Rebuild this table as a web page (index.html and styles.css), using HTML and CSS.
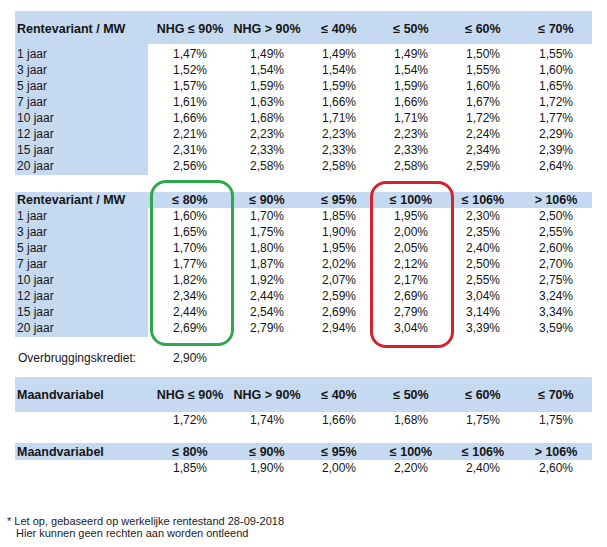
FILE: index.html
```html
<!DOCTYPE html>
<html lang="nl">
<head>
<meta charset="utf-8">
<title>Rentestanden</title>
<link rel="stylesheet" href="styles.css">
</head>
<body>
<div class="page">

  <section class="tbl t1">
    <div class="row head">
      <div class="lab">Rentevariant / MW</div>
      <div>NHG ≤ 90%</div><div>NHG &gt; 90%</div><div>≤ 40%</div><div>≤ 50%</div><div>≤ 60%</div><div>≤ 70%</div>
    </div>
    <div class="body">
      <div class="row"><div class="lab">1 jaar</div><div>1,47%</div><div>1,49%</div><div>1,49%</div><div>1,49%</div><div>1,50%</div><div>1,55%</div></div>
      <div class="row"><div class="lab">3 jaar</div><div>1,52%</div><div>1,54%</div><div>1,54%</div><div>1,54%</div><div>1,55%</div><div>1,60%</div></div>
      <div class="row"><div class="lab">5 jaar</div><div>1,57%</div><div>1,59%</div><div>1,59%</div><div>1,59%</div><div>1,60%</div><div>1,65%</div></div>
      <div class="row"><div class="lab">7 jaar</div><div>1,61%</div><div>1,63%</div><div>1,66%</div><div>1,66%</div><div>1,67%</div><div>1,72%</div></div>
      <div class="row"><div class="lab">10 jaar</div><div>1,66%</div><div>1,68%</div><div>1,71%</div><div>1,71%</div><div>1,72%</div><div>1,77%</div></div>
      <div class="row"><div class="lab">12 jaar</div><div>2,21%</div><div>2,23%</div><div>2,23%</div><div>2,23%</div><div>2,24%</div><div>2,29%</div></div>
      <div class="row"><div class="lab">15 jaar</div><div>2,31%</div><div>2,33%</div><div>2,33%</div><div>2,33%</div><div>2,34%</div><div>2,39%</div></div>
      <div class="row"><div class="lab">20 jaar</div><div>2,56%</div><div>2,58%</div><div>2,58%</div><div>2,58%</div><div>2,59%</div><div>2,64%</div></div>
    </div>
  </section>

  <section class="tbl t2">
    <span class="ring green"></span>
    <span class="ring red"></span>
    <div class="row head">
      <div class="lab">Rentevariant / MW</div>
      <div>≤ 80%</div><div>≤ 90%</div><div>≤ 95%</div><div>≤ 100%</div><div>≤ 106%</div><div>&gt; 106%</div>
    </div>
    <div class="body">
      <div class="row"><div class="lab">1 jaar</div><div>1,60%</div><div>1,70%</div><div>1,85%</div><div>1,95%</div><div>2,30%</div><div>2,50%</div></div>
      <div class="row"><div class="lab">3 jaar</div><div>1,65%</div><div>1,75%</div><div>1,90%</div><div>2,00%</div><div>2,35%</div><div>2,55%</div></div>
      <div class="row"><div class="lab">5 jaar</div><div>1,70%</div><div>1,80%</div><div>1,95%</div><div>2,05%</div><div>2,40%</div><div>2,60%</div></div>
      <div class="row"><div class="lab">7 jaar</div><div>1,77%</div><div>1,87%</div><div>2,02%</div><div>2,12%</div><div>2,50%</div><div>2,70%</div></div>
      <div class="row"><div class="lab">10 jaar</div><div>1,82%</div><div>1,92%</div><div>2,07%</div><div>2,17%</div><div>2,55%</div><div>2,75%</div></div>
      <div class="row"><div class="lab">12 jaar</div><div>2,34%</div><div>2,44%</div><div>2,59%</div><div>2,69%</div><div>3,04%</div><div>3,24%</div></div>
      <div class="row"><div class="lab">15 jaar</div><div>2,44%</div><div>2,54%</div><div>2,69%</div><div>2,79%</div><div>3,14%</div><div>3,34%</div></div>
      <div class="row"><div class="lab">20 jaar</div><div>2,69%</div><div>2,79%</div><div>2,94%</div><div>3,04%</div><div>3,39%</div><div>3,59%</div></div>
    </div>
  </section>

  <div class="row bridge">
    <div class="lab plain">Overbruggingskrediet:</div><div>2,90%</div>
  </div>

  <section class="tbl t3">
    <div class="row head">
      <div class="lab">Maandvariabel</div>
      <div>NHG ≤ 90%</div><div>NHG &gt; 90%</div><div>≤ 40%</div><div>≤ 50%</div><div>≤ 60%</div><div>≤ 70%</div>
    </div>
    <div class="row">
      <div></div><div>1,72%</div><div>1,74%</div><div>1,66%</div><div>1,68%</div><div>1,75%</div><div>1,75%</div>
    </div>
  </section>

  <section class="tbl t4">
    <div class="row head">
      <div class="lab">Maandvariabel</div>
      <div>≤ 80%</div><div>≤ 90%</div><div>≤ 95%</div><div>≤ 100%</div><div>≤ 106%</div><div>&gt; 106%</div>
    </div>
    <div class="row">
      <div></div><div>1,85%</div><div>1,90%</div><div>2,00%</div><div>2,20%</div><div>2,40%</div><div>2,60%</div>
    </div>
  </section>

  <p class="note">* Let op, gebaseerd op werkelijke rentestand 28-09-2018<br>Hier kunnen geen rechten aan worden ontleend</p>
</div>
</body>
</html>
```

FILE: styles.css
```css
html, body {
  margin: 0;
  padding: 0;
  background: #ffffff;
}

.page {
  padding: 11px 0 0 15px;
  font-family: "Liberation Sans", Arial, sans-serif;
  font-size: 12px;
  color: #151515;
}

.tbl {
  width: 577px;
}

.row {
  display: grid;
  grid-template-columns: 133px 84px 70px 74px 70px 74px 72px;
  height: 16px;
  line-height: 16px;
  text-align: center;
}

.row .lab {
  text-align: left;
  padding-left: 2px;
}

.head {
  background: #c5d9f1;
  font-weight: bold;
  font-size: 12.5px;
  align-items: center;
}

.body {
  background: linear-gradient(to right, #c5d9f1 133px, transparent 133px);
}

.t1 .head {
  height: 33px;
  padding-top: 3px;
  box-sizing: border-box;
}

.t1 .body {
  padding: 2px 0 1px;
}

.t2 {
  position: relative;
  margin-top: 17px;
}

.t2 .body {
  padding-bottom: 1px;
}

.ring {
  position: absolute;
  width: 84px;
  box-sizing: border-box;
  border: 3px solid;
  border-radius: 16px;
  z-index: 2;
}

.ring.green {
  left: 135px;
  top: -12px;
  height: 166px;
  border-color: #2ea84e;
}

.ring.red {
  left: 355px;
  top: -11px;
  height: 167px;
  border-color: #d2232b;
}

.bridge {
  margin-top: 13px;
}

.bridge .plain {
  padding-left: 3px;
}

.t3 {
  margin-top: 11px;
}

.t3 .head {
  height: 35px;
}

.t4 {
  margin-top: 15px;
}

.t4 .head {
  height: 17px;
}

.note {
  margin: 39px 0 0;
  padding-left: 1px;
  font-size: 11px;
  line-height: 12px;
  color: #1a1a1a;
  text-indent: -9px;
  padding-left: 1px;
  margin-left: 0;
}
```
